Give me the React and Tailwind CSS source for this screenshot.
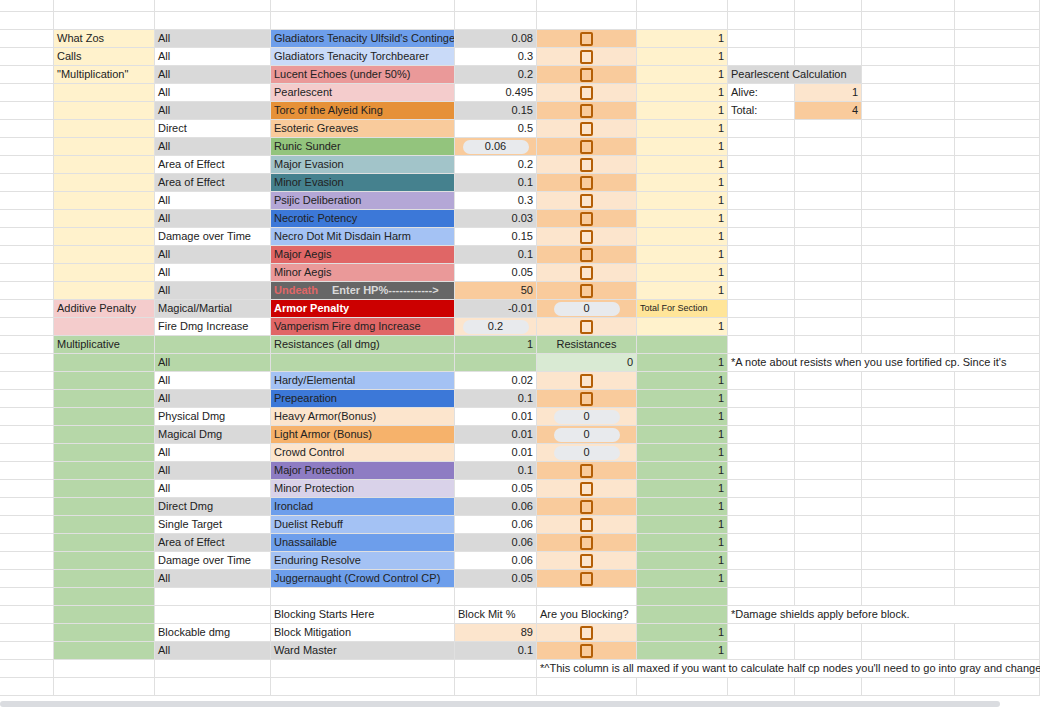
import React from 'react';

const G = 'bg-[#d9d9d9]';
const W = 'bg-white';
const Y = 'bg-[#fff2cc]';
const O = 'bg-[#f9cb9c]';
const P = 'bg-[#fce5cd]';
const GR = 'bg-[#b6d7a8]';
const PK = 'bg-[#f4cccc]';

const cols = 'grid grid-cols-[54px_101px_116px_184px_82px_100px_91px_67px_67px_93px_1fr]';

const Checkbox = () => (
  <span className="mx-auto block w-[13px] h-[14px] border-2 border-[#b45f06] rounded-[2px]" />
);

const Pill = ({ children }) => (
  <span className="mx-auto flex items-center justify-center w-[66px] h-[14px] rounded-full bg-[#e8eaed] text-[11px]">{children}</span>
);

const Cell = ({ c = {} }) => {
  const { t, bg = '', cls = '', kind, span = '' } = c;
  return (
    <div className={`h-[18px] border-r border-b border-[#e0e0e0] px-[3px] flex items-center whitespace-nowrap ${span ? 'overflow-visible' : 'overflow-hidden'} ${bg} ${span} ${cls}`}>
      {kind === 'cb' ? <Checkbox /> : kind === 'pill' ? <Pill>{t}</Pill> : t}
    </div>
  );
};

const top = [
  ['What Zos', 'All', "Gladiators Tenacity Ulfsild's Contingency", 'bg-[#6d9eeb]', '0.08'],
  ['Calls', 'All', 'Gladiators Tenacity Torchbearer', 'bg-[#c9daf8]', '0.3'],
  ['"Multiplication"', 'All', 'Lucent Echoes (under 50%)', 'bg-[#ea9999]', '0.2'],
  ['', 'All', 'Pearlescent', 'bg-[#f4cccc]', '0.495'],
  ['', 'All', 'Torc of the Alyeid King', 'bg-[#e69138]', '0.15'],
  ['', 'Direct', 'Esoteric Greaves', 'bg-[#f9cb9c]', '0.5'],
  ['', 'All', 'Runic Sunder', 'bg-[#93c47d]', '0.06'],
  ['', 'Area of Effect', 'Major Evasion', 'bg-[#a2c4c9]', '0.2'],
  ['', 'Area of Effect', 'Minor Evasion', 'bg-[#45818e]', '0.1'],
  ['', 'All', 'Psijic Deliberation', 'bg-[#b4a7d6]', '0.3'],
  ['', 'All', 'Necrotic Potency', 'bg-[#3c78d8]', '0.03'],
  ['', 'Damage over Time', 'Necro Dot Mit Disdain Harm', 'bg-[#a4c2f4]', '0.15'],
  ['', 'All', 'Major Aegis', 'bg-[#e06666]', '0.1'],
  ['', 'All', 'Minor Aegis', 'bg-[#ea9999]', '0.05'],
  ['', 'All', 'UNDEATH', 'bg-[#666666]', '50'],
];

const resist = [
  ['All', 'Hardy/Elemental', 'bg-[#a4c2f4]', '0.02', 'cb'],
  ['All', 'Prepearation', 'bg-[#3c78d8]', '0.1', 'cb'],
  ['Physical Dmg', 'Heavy Armor(Bonus)', 'bg-[#fce5cd]', '0.01', 'pill'],
  ['Magical Dmg', 'Light Armor (Bonus)', 'bg-[#f6b26b]', '0.01', 'pill'],
  ['All', 'Crowd Control', 'bg-[#fce5cd]', '0.01', 'pill'],
  ['All', 'Major Protection', 'bg-[#8e7cc3]', '0.1', 'cb'],
  ['All', 'Minor Protection', 'bg-[#d9d2e9]', '0.05', 'cb'],
  ['Direct Dmg', 'Ironclad', 'bg-[#6d9eeb]', '0.06', 'cb'],
  ['Single Target', 'Duelist Rebuff', 'bg-[#a4c2f4]', '0.06', 'cb'],
  ['Area of Effect', 'Unassailable', 'bg-[#6d9eeb]', '0.06', 'cb'],
  ['Damage over Time', 'Enduring Resolve', 'bg-[#a4c2f4]', '0.06', 'cb'],
  ['All', 'Juggernaught (Crowd Control CP)', 'bg-[#6d9eeb]', '0.05', 'cb'],
];

const side = {
  2: [{ t: 'Pearlescent Calculation', bg: G, span: 'col-span-2' }],
  3: [{ t: 'Alive:' }, { t: '1', bg: P, cls: 'justify-end' }],
  4: [{ t: 'Total:' }, { t: '4', bg: O, cls: 'justify-end' }],
};

const blank = (n) => Array.from({ length: n }, () => ({}));
const R = 'justify-end';

const rows = [];
rows.push(blank(10));

top.forEach(([a, b, c, cbg, v], i) => {
  const even = i % 2 === 0;
  const row = [
    { t: a, bg: Y },
    { t: b, bg: even ? G : W },
    c === 'UNDEATH'
      ? { t: <><span className="text-[#e06666] font-bold">Undeath</span><span className="ml-[14px] text-[#d9d9d9] font-bold">Enter HP%------------&gt;</span></>, bg: cbg }
      : { t: c, bg: cbg },
    i === 6
      ? { t: v, bg: O, kind: 'pill' }
      : { t: v, bg: i === 14 ? O : even ? G : W, cls: R },
    { kind: 'cb', bg: even ? O : P },
    { t: '1', bg: Y, cls: R },
  ];
  const s = side[i] || [];
  rows.push([...row, ...s, ...blank(10 - row.length - s.reduce((n, x) => n + (x.span ? 2 : 1), 0))]);
});

rows.push([
  { t: 'Additive Penalty', bg: PK },
  { t: 'Magical/Martial', bg: G },
  { t: 'Armor Penalty', bg: 'bg-[#cc0000]', cls: 'text-white font-bold' },
  { t: '-0.01', bg: G, cls: R },
  { t: '0', bg: O, kind: 'pill' },
  { t: 'Total For Section', bg: 'bg-[#ffe599]', cls: 'text-[9px]' },
  ...blank(4),
]);
rows.push([
  { bg: PK },
  { t: 'Fire Dmg Increase', bg: W },
  { t: 'Vamperism Fire dmg Increase', bg: 'bg-[#e06666]' },
  { t: '0.2', bg: P, kind: 'pill' },
  { kind: 'cb', bg: P },
  { t: '1', bg: Y, cls: R },
  ...blank(4),
]);
rows.push([
  { t: 'Multiplicative', bg: GR },
  { bg: GR },
  { t: 'Resistances (all dmg)', bg: GR },
  { t: '1', bg: GR, cls: R },
  { t: 'Resistances', bg: GR, cls: 'justify-center' },
  { bg: GR },
  ...blank(4),
]);
rows.push([
  { bg: GR },
  { t: 'All', bg: GR },
  { bg: GR },
  { bg: GR },
  { t: '0', bg: 'bg-[#d9ead3]', cls: R },
  { t: '1', bg: GR, cls: R },
  { t: "*A note about resists when you use fortified cp. Since it's", span: 'col-span-4' },
]);

resist.forEach(([b, c, cbg, v, kind], i) => {
  const even = i % 2 === 0;
  rows.push([
    { bg: GR },
    { t: b, bg: even ? W : G },
    { t: c, bg: cbg },
    { t: v, bg: even ? W : G, cls: R },
    { t: kind === 'pill' ? '0' : '', kind, bg: even ? P : O },
    { t: '1', bg: GR, cls: R },
    ...blank(4),
  ]);
});

rows.push([{ bg: GR }, ...blank(4), { bg: GR }, ...blank(4)]);
rows.push([
  { bg: GR },
  {},
  { t: 'Blocking Starts Here' },
  { t: 'Block Mit %' },
  { t: 'Are you Blocking?' },
  { bg: GR },
  { t: '*Damage shields apply before block.', span: 'col-span-4' },
]);
rows.push([
  { bg: GR },
  { t: 'Blockable dmg', bg: W },
  { t: 'Block Mitigation', bg: W },
  { t: '89', bg: P, cls: R },
  { kind: 'cb', bg: P },
  { t: '1', bg: GR, cls: R },
  ...blank(4),
]);
rows.push([
  { bg: GR },
  { t: 'All', bg: G },
  { t: 'Ward Master', bg: G },
  { t: '0.1', bg: G, cls: R },
  { kind: 'cb', bg: O },
  { t: '1', bg: GR, cls: R },
  ...blank(4),
]);
rows.push([
  ...blank(4),
  { t: "*^This column is all maxed if you want to calculate half cp nodes you'll need to go into gray and change it.", span: 'col-span-6' },
]);
rows.push(blank(10));

export default function App() {
  return (
    <div className="w-[1040px] h-[707px] overflow-hidden bg-white relative text-[11px] text-[#222]" style={{ fontFamily: '"Liberation Sans", Arial, sans-serif' }}>
      <div className={`${cols} h-[12px] border-b border-[#e0e0e0]`}>
        {blank(11).map((_, i) => <div key={i} className="border-r border-[#e0e0e0]" />)}
      </div>
      {rows.map((r, i) => (
        <div key={i} className={cols}>
          <Cell />
          {r.map((c, j) => <Cell key={j} c={c} />)}
        </div>
      ))}
      <div className="absolute left-0 bottom-0 w-[1000px] h-[6px] rounded-full bg-[#dadce0]" />
    </div>
  );
}
